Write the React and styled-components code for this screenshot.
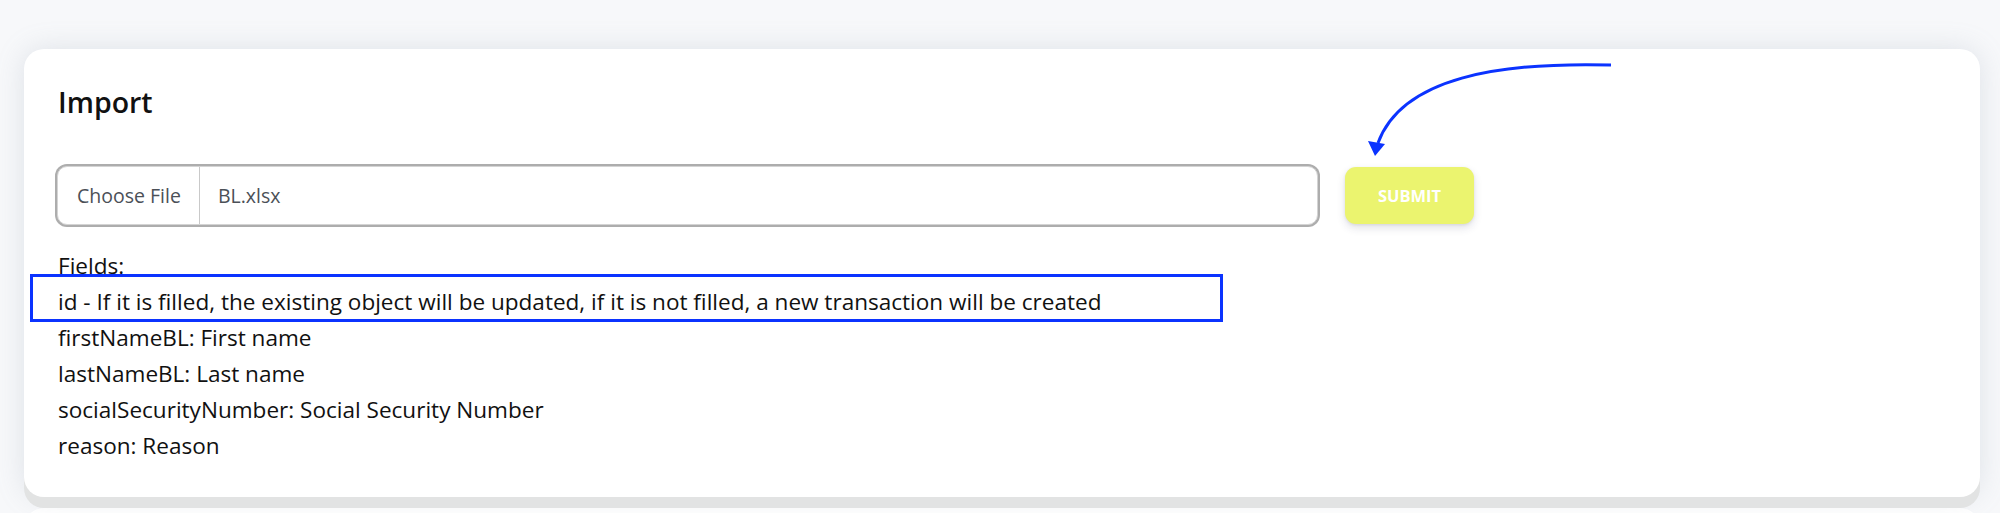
import styled, { createGlobalStyle } from "styled-components";

const GlobalStyle = createGlobalStyle`
  html, body {
    margin: 0;
    padding: 0;
    background: #f7f8fa;
    font-family: "Open Sans", "Noto Sans", sans-serif;
    color: #111;
  }
  * { box-sizing: border-box; }
`;

const fields = [
  "Fields:",
  "id - If it is filled, the existing object will be updated, if it is not filled, a new transaction will be created",
  "firstNameBL: First name",
  "lastNameBL: Last name",
  "socialSecurityNumber: Social Security Number",
  "reason: Reason",
];

const App = () => {
  return (
    <Page>
      <GlobalStyle />
      <Card>
        <Title>Import</Title>
        <UploadRow>
          <FileInput>
            <ChooseButton>Choose File</ChooseButton>
            <FileName>BL.xlsx</FileName>
          </FileInput>
          <SubmitButton>Submit</SubmitButton>
        </UploadRow>
        <FieldList>
          {fields.map((f) => (
            <FieldLine key={f}>{f}</FieldLine>
          ))}
        </FieldList>

        {/* annotations drawn over the card */}
        <Highlight />
        <Arrow viewBox="0 0 1956 448" width="1956" height="448">
          <path
            d="M1587 16 C1476 13 1378 28 1354 94"
            fill="none"
            stroke="#0b33ff"
            strokeWidth="3"
          />
          <polygon points="1344,92 1361,95 1351,107" fill="#0b33ff" />
        </Arrow>
      </Card>
      <NextCard />
    </Page>
  );
};

export default App;

const Page = styled.div`
  width: 100%;
  height: 513px;
  display: flex;
  flex-direction: column;
  gap: 11px;
  padding: 49px 20px 0 24px;
  overflow: hidden;
`;

const Card = styled.section`
  position: relative;
  flex: none;
  width: 100%;
  background: #fff;
  border-radius: 20px;
  padding: 36px 34px 33px;
  box-shadow: 0 11px 0 0 #e2e3e3, 0 0 28px rgba(136, 152, 170, 0.22);
`;

const NextCard = styled.section`
  flex: none;
  width: 100%;
  height: 20px;
  background: #fff;
  border-radius: 20px 20px 0 0;
`;

const Title = styled.h2`
  margin: 0;
  font-size: 28.5px;
  line-height: 35px;
  font-weight: 600;
  color: #111;
`;

const UploadRow = styled.div`
  display: flex;
  align-items: center;
  gap: 27px;
  margin-top: 46px;
`;

const FileInput = styled.div`
  flex: 0 0 1261px;
  height: 59px;
  display: flex;
  align-items: stretch;
  margin-left: -1px;
  border: 1px solid #d4d4d4;
  border-radius: 10px;
  box-shadow: 0 0 0 2px #adadad;
  background: #fff;
  font-size: 19.5px;
  color: #4b5057;
  overflow: hidden;
`;

const ChooseButton = styled.span`
  display: flex;
  align-items: center;
  padding: 0 18px 0 19px;
  border-right: 1px solid #c9c9c9;
`;

const FileName = styled.span`
  display: flex;
  align-items: center;
  padding-left: 18px;
`;

const SubmitButton = styled.button`
  width: 129px;
  height: 57px;
  border: none;
  border-radius: 11px;
  background: #ebf46f;
  color: #fff;
  font-family: "Open Sans", sans-serif;
  font-weight: 700;
  font-size: 16.5px;
  text-transform: uppercase;
  box-shadow: 0 4px 8px rgba(50, 50, 93, 0.14), 0 1px 3px rgba(0, 0, 0, 0.08);
  cursor: pointer;
`;

const FieldList = styled.div`
  margin-top: 23px;
  display: flex;
  flex-direction: column;
`;

const FieldLine = styled.div`
  font-size: 22.55px;
  line-height: 36px;
  color: #111;
`;

const Highlight = styled.div`
  position: absolute;
  left: 6px;
  top: 225px;
  width: 1193px;
  height: 48px;
  border: 3px solid #0b33ff;
  pointer-events: none;
`;

const Arrow = styled.svg`
  position: absolute;
  left: 0;
  top: 0;
  pointer-events: none;
  overflow: visible;
`;
